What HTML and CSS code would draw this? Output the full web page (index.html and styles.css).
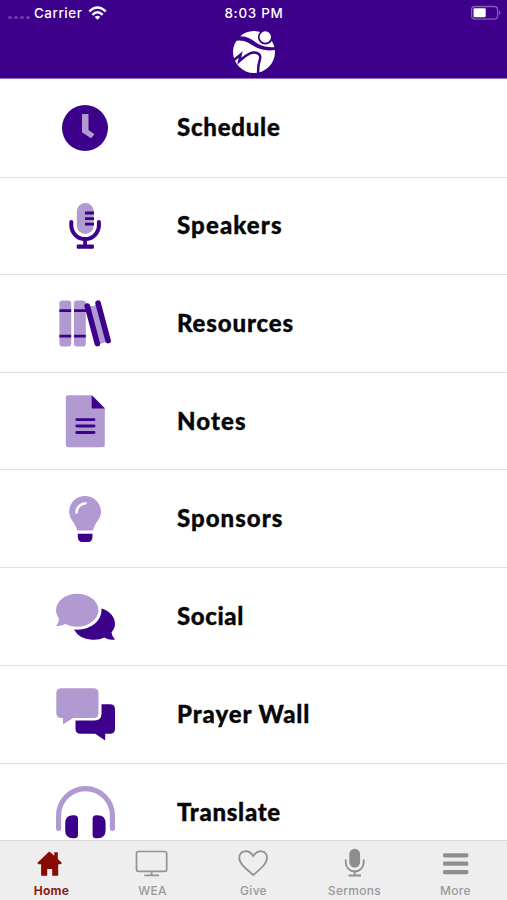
FILE: index.html
```html
<!DOCTYPE html>
<html lang="en">
<head>
<meta charset="utf-8">
<title>Home</title>
<link rel="stylesheet" href="styles.css">
</head>
<body>
<div class="app">
  <header class="header">
    <div class="status">
      <div class="carrier">
        <span class="signal"><i></i><i></i><i></i><i></i></span>
        <span class="carrier-name">Carrier</span>
        <svg class="wifi" viewBox="88 5 20 15"><g fill="none" stroke="#fff" stroke-width="2.5"><path d="M89.3 11.4Q97.5 3.6 105.7 11.4"/><path d="M92.4 14.8Q97.5 9.8 102.6 14.8"/></g><path d="M94.7 16.9Q97.5 14.5 100.3 16.9L97.5 19.8Z" fill="#fff"/></svg>
      </div>
      <time class="time">8:03 PM</time>
      <svg class="battery" viewBox="470 5 34 16"><rect x="471.6" y="6.5" width="26" height="12.6" rx="3.4" fill="none" stroke="#875bbd" stroke-width="1.3"/><rect x="473.5" y="8.3" width="12.2" height="9" rx="1.2" fill="#fff"/><path d="M499 10.5q3 2.3 0 4.6z" fill="#875bbd"/></svg>
    </div>
    <svg class="logo" viewBox="232 30 44 44">
      <circle cx="254" cy="52" r="21" fill="#fff"/>
      <circle cx="265.400" cy="37" r="7.500" fill="#3c008a"/>
      <circle cx="265.300" cy="37" r="5.700" fill="#fff"/>
      <path d="M234 41L238 36.500C247 35.500 252 40 257 43.200Q265 48.300 277 47V49.600Q266 51.800 258 48.300C250 44.500 247 40.500 239 40.500Z" fill="#3c008a"/>
      <path d="M231 62.500L240.700 54.500L239.300 61Q245 55.500 250 53.300C256 51 261.500 53.800 260 59Q257.500 67 258.300 74" fill="none" stroke="#3c008a" stroke-width="2.500"/>
    </svg>
  </header>

  <main class="menu">
    <a class="row"><svg class="icon" viewBox="53 79 64 98"><circle cx="85" cy="128" r="23" class="dark"/><path class="light" d="M82 114h6.500v16l6 4.300-3.500 4-9-6z"/></svg><span class="label schedule">Schedule</span></a>
    <a class="row"><svg class="icon" viewBox="53 177 64 98"><rect x="76.800" y="203" width="17" height="31" rx="8.500" class="light"/><path class="line" stroke-width="2.800" d="M85 213h9M85 218.600h9M85 224.200h9"/><path class="line" stroke-width="4" stroke-linecap="round" d="M71.300 222v3.300a13.800 13.800 0 0 0 27.600 0V222"/><path class="line" stroke-width="3.800" d="M85.100 239v7"/><rect x="76.700" y="244.600" width="17.200" height="4.200" rx="1.200" class="dark"/></svg><span class="label speakers">Speakers</span></a>
    <a class="row"><svg class="icon" viewBox="53 275 64 98"><g class="light"><rect x="59.400" y="300.500" width="11.800" height="46" rx="2.700"/><rect x="74" y="300.500" width="11.800" height="46" rx="2.700"/><path d="M88 306q5 1 9-2l10 38q-6 1-9 3z"/></g><path class="line" stroke-width="2.800" d="M59.400 310.600h11.800M74 310.600h12.500M59.400 336.200h11.800M74 336.200h11.800"/><path class="line" stroke-width="5.600" stroke-linecap="round" d="M87.300 306L97.300 343.600M98.100 303.200L108.100 340.600"/></svg><span class="label resources">Resources</span></a>
    <a class="row"><svg class="icon" viewBox="53 373 64 98"><path class="light" d="M68 395.300h24.200l12.600 12.800V445q0 2.200-2.200 2.200H68q-2.200 0-2.200-2.200v-47.500q0-2.200 2.200-2.200z"/><path class="dark" d="M91.700 395.300l13.200 13.200H91.700z"/><path class="line" stroke-width="2.900" stroke-linecap="round" d="M76.800 419.600h17.200M76.800 426h17.200M76.800 432.500h17.200"/></svg><span class="label notes">Notes</span></a>
    <a class="row"><svg class="icon" viewBox="53 470 64 98"><path class="light" d="M85 496C76 496 69.200 503 69.200 512C69.200 519 75 522 77.200 530.500H93C95 522 101 519 101 512C101 503 94 496 85 496Z"/><path d="M76.500 512.500q.5-8 9-9.300" fill="none" stroke="#fff" stroke-width="2.600" stroke-linecap="round"/><path class="dark" d="M77.800 533.700h14.700v2.500q0 5.800-4.500 5.800h-5.700q-4.500 0-4.500-5.800z"/></svg><span class="label sponsors">Sponsors</span></a>
    <a class="row"><svg class="icon" viewBox="53 568 64 98"><path class="dark" d="M101.500 608.500C110 611 115 617 115 624Q115 628.500 111.500 632.300Q111.700 636.500 115 639.500Q109 640.600 104.500 637.600Q99 640.200 92 639.700Q79 639 74 629.500V612H100Z"/><ellipse cx="77.200" cy="610.200" rx="24.300" ry="19.500" fill="#fff"/><ellipse cx="77.200" cy="610.200" rx="21.200" ry="16.500" class="light"/><path class="light" d="M59 617q0 6-3 8.800 5 1 10.500-2.200z"/></svg><span class="label social">Social</span></a>
    <a class="row"><svg class="icon" viewBox="53 666 64 98"><path class="dark" d="M80 704.300h30q5 0 5 5v19.500q0 5-5 5h-4.800v6.800l-10-6.800H80.500q-5 0-5-5v-19.500q0-5 4.500-5z"/><path d="M60 684h41.500v29.500q0 7-7 7H60z" fill="#fff"/><path class="light" d="M61.300 688.300h32.200q5 0 5 5v19.600q0 5-5 5H73l-10 6.600v-6.600h-1.700q-5 0-5-5v-19.600q0-5 5-5z"/></svg><span class="label prayer">Prayer Wall</span></a>
    <a class="row"><svg class="icon" viewBox="53 763 64 98"><path d="M58.600 828.300v-12.800a26.900 26.900 0 0 1 53.800 0v12.800" fill="none" stroke="#b199d1" stroke-width="5.200" stroke-linecap="round"/><path class="dark" d="M73 815.300h1.500q3.500 0 3.500 3.500v16q0 3.500-3.500 3.500H73q-7.800 0-7.800-8v-7q0-8 7.800-8zM97.600 815.300h-1.500q-3.500 0-3.500 3.500v16q0 3.500 3.500 3.500h1.500q8 0 8-8v-7q0-8-8-8z"/></svg><span class="label translate">Translate</span></a>
  </main>

  <nav class="tabs">
    <a class="tab active"><svg class="tab-icon" viewBox="34 847 34 30"><path fill="#870b03" d="M49.300 851.500l5 4.300v-3.500h3.500v6.700l4.200 4-1.500 1.200h-2.300v11.600h-6V869h-5v6.800h-6.100v-11.600h-2.300l-1.600-1.200z"/></svg><span class="tab-label">Home</span></a>
    <a class="tab"><svg class="tab-icon" viewBox="135 847 34 30"><g fill="none" stroke="#939393"><rect x="136.500" y="851.500" width="30.200" height="19.800" rx="2" stroke-width="1.700"/><path d="M151.600 871v4M144.300 875.300h14.800" stroke-width="1.800"/></g></svg><span class="tab-label">WEA</span></a>
    <a class="tab"><svg class="tab-icon" viewBox="236 847 34 30"><path d="M253.200 875C245 868 239.300 863.500 239.300 858C239.300 850.500 248.500 848.500 253.200 856C258 848.500 267 850.500 267 858C267 863.500 261.500 868 253.200 875Z" fill="none" stroke="#939393" stroke-width="1.800"/></svg><span class="tab-label">Give</span></a>
    <a class="tab"><svg class="tab-icon" viewBox="337 847 34 30"><rect x="349.300" y="848.800" width="10.800" height="18.700" rx="5.300" fill="#8e8e8e"/><g fill="none" stroke="#8e8e8e" stroke-width="1.800"><path d="M345.700 859.500v3a9 9 0 0 0 18 0v-3M354.700 871v4.500M348.500 875.500h12.500"/></g></svg><span class="tab-label">Sermons</span></a>
    <a class="tab"><svg class="tab-icon" viewBox="438 847 34 30"><rect x="443" y="853.200" width="25.300" height="4.200" rx="1.400" fill="#8e8e8e"/><rect x="443" y="861.600" width="25.300" height="4.200" rx="1.400" fill="#8e8e8e"/><rect x="443" y="870" width="25.300" height="4.200" rx="1.400" fill="#8e8e8e"/></svg><span class="tab-label">More</span></a>
  </nav>
</div>
</body>
</html>
```
FILE: styles.css
```css
* { box-sizing: border-box; }
body { margin: 0; background: #fff; }
.app {
  width: 507px;
  height: 900px;
  display: grid;
  grid-template-rows: 79px 761px 60px;
  overflow: hidden;
}

.header {
  background: #3c008a;
  border-bottom: 1px solid #9671c2;
  display: flex;
  flex-direction: column;
  align-items: center;
  color: #fff;
}
.status {
  width: 100%;
  height: 30px;
  padding: 5px 3px 0 8px;
  display: grid;
  grid-template-columns: 1fr 90px 1fr;
  align-items: start;
  font: 500 13.4px/16px Inter, sans-serif;
}
.carrier { display: flex; }
.signal { display: flex; gap: 2px; width: 26px; padding-top: 11px; }
.signal i { width: 4px; height: 3px; border-radius: 2px; background: #6c39a9; }
.carrier-name { width: 54px; letter-spacing: 0.55px; }
.wifi { width: 20px; height: 15px; }
.time { padding-right: 4px; text-align: center; letter-spacing: 0.75px; white-space: nowrap; }
.battery { width: 34px; height: 16px; justify-self: end; }
.logo { width: 44px; height: 44px; flex: none; }

.menu {
  display: grid;
  grid-template-rows: 99px 97px 98px 97px 98px 98px 98px 98px;
  overflow: hidden;
}
.row {
  display: flex;
  align-items: flex-start;
  padding-left: 53px;
  border-bottom: 1px solid #dfdfe2;
  overflow: hidden;
}
.icon { width: 64px; height: 98px; flex: none; }
.row:nth-child(2) .icon,
.row:nth-child(8) .icon { margin-top: -1px; }
.dark { fill: #3c008a; }
.light { fill: #b199d1; }
.line { fill: none; stroke: #3c008a; }
.label {
  margin-left: 60px;
  font: 900 24px/96px Lato, sans-serif;
  color: #070707;
  -webkit-text-stroke: 0.35px #070707;
  white-space: nowrap;
}
.schedule { letter-spacing: 0.75px; }
.speakers { letter-spacing: 1.1px; line-height: 94px; }
.resources { letter-spacing: 0.85px; }
.notes { letter-spacing: 1.1px; }
.sponsors { letter-spacing: 1px; }
.social { letter-spacing: 0.6px; }
.prayer { letter-spacing: 0.9px; }
.translate { letter-spacing: 0.7px; }

.tabs {
  display: grid;
  grid-template-columns: repeat(5, 101px);
  background: #eee;
  border-top: 1px solid #d9d9d9;
}
.tab {
  display: flex;
  flex-direction: column;
  align-items: center;
  padding-top: 6px;
  color: #999;
  font: 500 12px/14px Inter, sans-serif;
  letter-spacing: 0.3px;
}
.tab-icon { width: 34px; height: 30px; margin-bottom: 7px; }
.tab-label { padding-left: 2px; }
.active { color: #8d1a16; font-weight: 700; }
```
